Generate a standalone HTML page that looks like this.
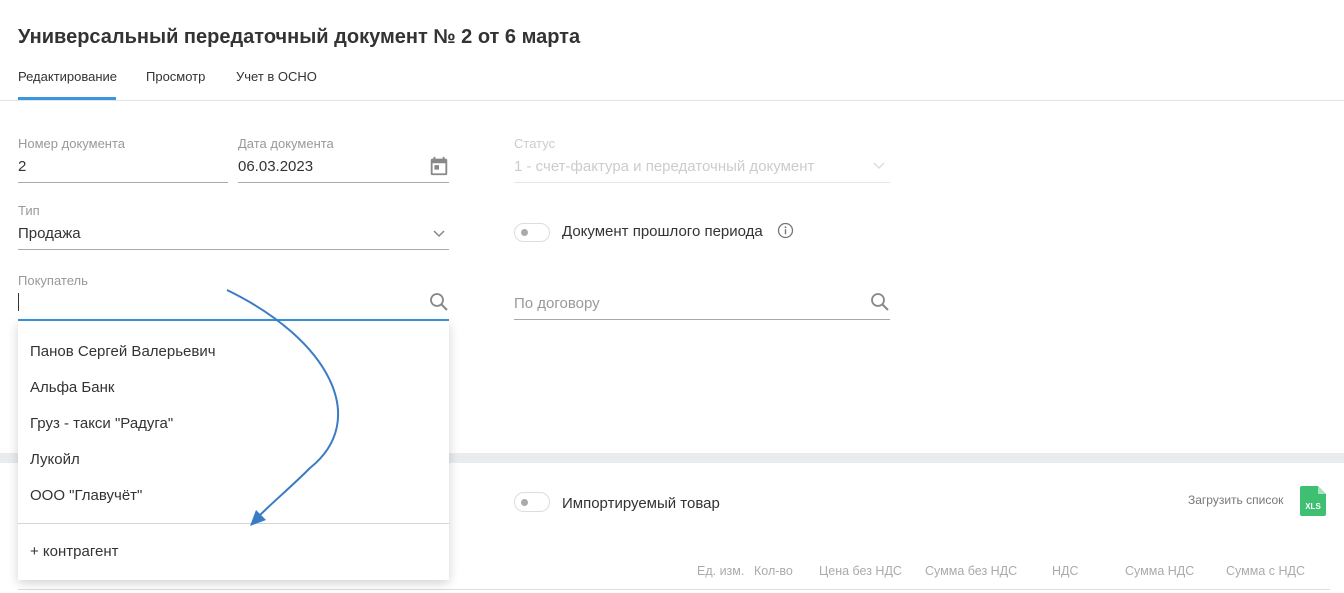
<!DOCTYPE html>
<html><head><meta charset="utf-8"><style>
*{box-sizing:border-box;margin:0;padding:0}
body{width:1344px;height:593px;background:#fff;font-family:"Liberation Sans",Arial,sans-serif;position:relative;overflow:hidden;color:#333}
.a{position:absolute;white-space:nowrap}
.lbl{font-size:13px;color:#999}
.val{font-size:15px;color:#333}
.ln{position:absolute;height:1px;background:#aaa}
.th{font-size:12.5px;color:#aaa;top:564px}
</style></head><body>
<div class="a" style="left:18px;top:26px;font-size:20px;font-weight:bold;color:#333">Универсальный передаточный документ № 2 от 6 марта</div>
<div class="a" style="left:18px;top:69px;font-size:13px;color:#333">Редактирование</div>
<div class="a" style="left:146px;top:69px;font-size:13px;color:#333">Просмотр</div>
<div class="a" style="left:236px;top:69px;font-size:13px;color:#333">Учет в ОСНО</div>
<div class="a" style="left:18px;top:97px;width:98px;height:3px;background:#3a96dd"></div>
<div class="a" style="left:0;top:100px;width:1344px;height:1px;background:#e3e3e3"></div>

<div class="a lbl" style="left:18px;top:136px">Номер документа</div>
<div class="a val" style="left:18px;top:158px">2</div>
<div class="ln" style="left:18px;top:182px;width:210px"></div>
<div class="a lbl" style="left:238px;top:136px">Дата документа</div>
<div class="a val" style="left:238px;top:158px">06.03.2023</div>
<svg class="a" style="left:428px;top:155px" width="22" height="22" viewBox="0 0 24 24"><path fill="#888" d="M19 4h-1V2h-2v2H8V2H6v2H5a2 2 0 0 0-2 2v14a2 2 0 0 0 2 2h14a2 2 0 0 0 2-2V6a2 2 0 0 0-2-2zm0 16H5V9h14v11zM7 11h5v5H7z" /></svg>
<div class="ln" style="left:238px;top:182px;width:211px"></div>

<div class="a lbl" style="left:514px;top:136px;color:#ccc">Статус</div>
<div class="a val" style="left:514px;top:158px;color:#ccc">1 - счет-фактура и передаточный документ</div>
<svg class="a" style="left:872px;top:160px" width="14" height="10"><path d="M2 3l5 5 5-5" stroke="#ddd" stroke-width="1.5" fill="none"/></svg>
<div class="ln" style="left:514px;top:182px;width:376px;background:#e6e6e6"></div>

<div class="a lbl" style="left:18px;top:203px">Тип</div>
<div class="a val" style="left:18px;top:225px">Продажа</div>
<svg class="a" style="left:432px;top:228px" width="14" height="10"><path d="M2 3l5 5 5-5" stroke="#888" stroke-width="1.5" fill="none"/></svg>
<div class="ln" style="left:18px;top:249px;width:431px"></div>

<div class="a" style="left:514px;top:223px;width:36px;height:19px;border:1px solid #ddd;border-radius:10px"></div>
<div class="a" style="left:521px;top:229px;width:7px;height:7px;border-radius:50%;background:#aaa"></div>
<div class="a val" style="left:562px;top:223px">Документ прошлого периода</div>
<svg class="a" style="left:777px;top:222px" width="17" height="17" viewBox="0 0 17 17"><circle cx="8.5" cy="8.5" r="7" stroke="#777" stroke-width="1.3" fill="none"/><rect x="7.8" y="7.3" width="1.4" height="5" fill="#777"/><circle cx="8.5" cy="5.2" r="0.9" fill="#777"/></svg>

<div class="a lbl" style="left:18px;top:273px">Покупатель</div>
<div class="a" style="left:18px;top:293px;width:1px;height:18px;background:#333"></div>
<svg class="a" style="left:429px;top:292px" width="20" height="20" viewBox="0 0 20 20"><circle cx="8" cy="8" r="6" stroke="#888" stroke-width="1.8" fill="none"/><path d="M12.5 12.5l5.5 5.5" stroke="#888" stroke-width="2"/></svg>
<div class="a" style="left:18px;top:319px;width:431px;height:2px;background:#3a96dd"></div>

<div class="a val" style="left:514px;top:295px;color:#999">По договору</div>
<svg class="a" style="left:870px;top:292px" width="20" height="20" viewBox="0 0 20 20"><circle cx="8" cy="8" r="6" stroke="#888" stroke-width="1.8" fill="none"/><path d="M12.5 12.5l5.5 5.5" stroke="#888" stroke-width="2"/></svg>
<div class="ln" style="left:514px;top:319px;width:376px"></div>

<div class="a" style="left:0;top:453px;width:1344px;height:10px;background:#e9ecef"></div>

<div class="a" style="left:514px;top:492px;width:36px;height:20px;border:1px solid #ddd;border-radius:10px"></div>
<div class="a" style="left:521px;top:499px;width:7px;height:7px;border-radius:50%;background:#aaa"></div>
<div class="a val" style="left:562px;top:495px">Импортируемый товар</div>
<div class="a" style="left:1188px;top:493px;font-size:12px;color:#777">Загрузить список</div>
<svg class="a" style="left:1300px;top:486px" width="26" height="30" viewBox="0 0 26 30"><path d="M0 2a2 2 0 0 1 2-2h16l8 8v20a2 2 0 0 1-2 2H2a2 2 0 0 1-2-2z" fill="#3fbf72"/><path d="M18 0v8h8z" fill="#a5e3bd"/><text x="13" y="23" font-size="8" font-weight="bold" fill="#fff" text-anchor="middle" font-family="Liberation Sans">XLS</text></svg>

<div class="a th" style="left:697px">Ед. изм.</div>
<div class="a th" style="left:754px">Кол-во</div>
<div class="a th" style="left:819px">Цена без НДС</div>
<div class="a th" style="left:925px">Сумма без НДС</div>
<div class="a th" style="left:1052px">НДС</div>
<div class="a th" style="left:1125px">Сумма НДС</div>
<div class="a th" style="left:1226px">Сумма с НДС</div>
<div class="a" style="left:18px;top:589px;width:1312px;height:1px;background:#ddd"></div>

<div class="a" style="left:18px;top:321px;width:431px;height:259px;background:#fff;box-shadow:0 3px 10px rgba(0,0,0,.18)">
<div class="a val" style="left:12px;top:22px">Панов Сергей Валерьевич</div>
<div class="a val" style="left:12px;top:58px">Альфа Банк</div>
<div class="a val" style="left:12px;top:94px">Груз - такси "Радуга"</div>
<div class="a val" style="left:12px;top:130px">Лукойл</div>
<div class="a val" style="left:12px;top:166px">ООО "Главучёт"</div>
<div class="a" style="left:0;top:202px;width:431px;height:1px;background:#d6d6d6"></div>
<div class="a val" style="left:12px;top:222px">+ контрагент</div>
</div>

<svg class="a" style="left:0;top:0" width="1344" height="593"><path d="M227 290 C330 340 370 420 310 468 C290 488 275 500 258 517" stroke="#3a7cc4" stroke-width="2" fill="none"/><path d="M250 526 L256 510 L266 520 Z" fill="#3a7cc4"/></svg>
</body></html>
